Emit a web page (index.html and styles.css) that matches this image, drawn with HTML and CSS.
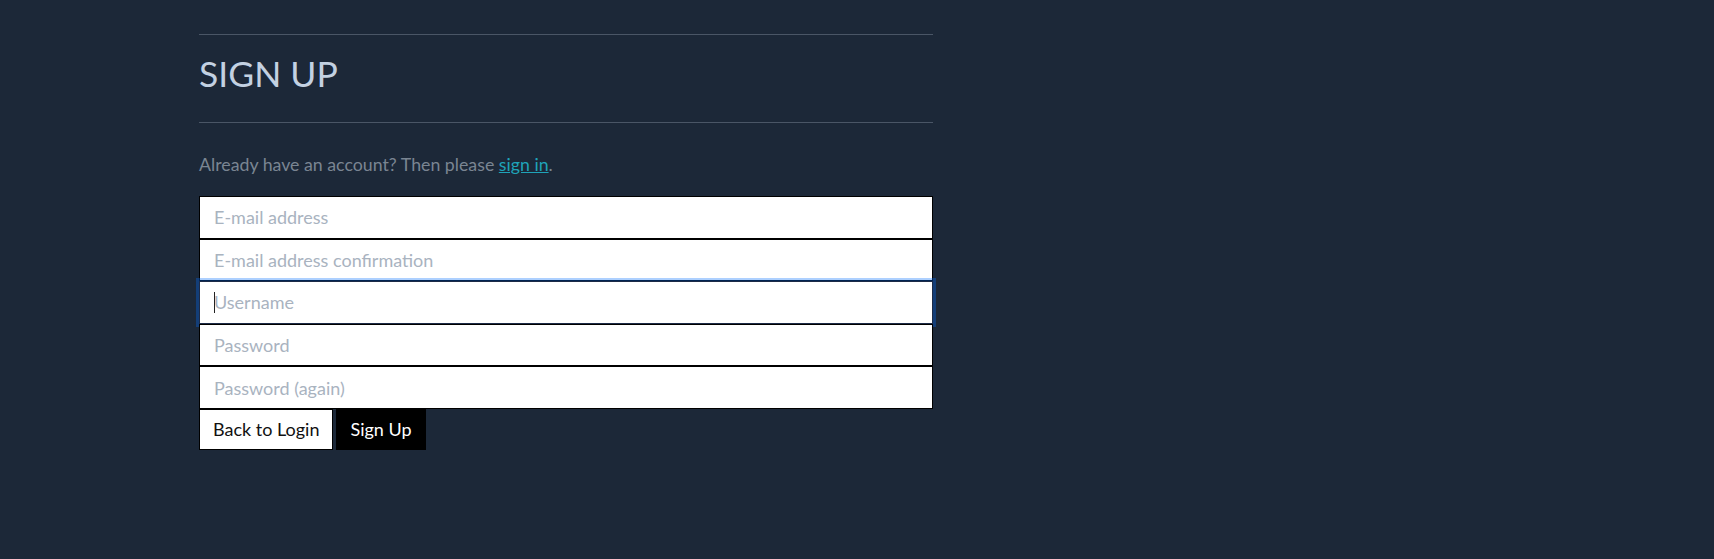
FILE: index.html
```html
<!DOCTYPE html>
<html lang="en">
<head>
<meta charset="utf-8">
<title>Sign Up</title>
<link rel="stylesheet" href="styles.css">
</head>
<body>
<main class="page">
  <section class="panel">
    <div class="rule"></div>
    <h1 class="title">SIGN UP</h1>
    <div class="rule"></div>
    <p class="lead">Already have an account? Then please <a class="link" href="#">sign in</a>.</p>
    <form class="form">
      <input class="field" type="email" placeholder="E-mail address">
      <input class="field" type="email" placeholder="E-mail address confirmation">
      <div class="field-wrap">
        <input class="field is-focused" type="text" placeholder="Username">
        <span class="caret"></span>
      </div>
      <input class="field" type="password" placeholder="Password">
      <input class="field" type="password" placeholder="Password (again)">
      <div class="actions">
        <button class="btn btn-light" type="button">Back to Login</button>
        <button class="btn btn-dark" type="submit">Sign Up</button>
      </div>
    </form>
  </section>
</main>
</body>
</html>
```

FILE: styles.css
```css
html, body {
  margin: 0;
  padding: 0;
  background: #1c2838;
  height: 100%;
}
body {
  font-family: Lato, "Open Sans", sans-serif;
}
.page {
  padding: 34px 0 0 199px;
}
.panel {
  width: 734px;
}
.rule {
  height: 1px;
  background: #4a5666;
}
.title {
  margin: 0;
  padding: 17px 0 27px;
  font-size: 35.5px;
  line-height: 43px;
  font-weight: 400;
  color: #c3d1e2;
}
.lead {
  margin: 30px 0 21px;
  font-size: 17.75px;
  line-height: 22px;
  color: #7a8592;
}
.link {
  color: #1fa3b9;
  text-decoration: underline;
}
.form {
  display: flex;
  flex-direction: column;
}
.field-wrap {
  position: relative;
  z-index: 1;
}
.field {
  box-sizing: border-box;
  display: block;
  width: 734px;
  height: 42.6px;
  margin: 0;
  padding: 0 14px;
  border: 1px solid #000;
  border-radius: 0;
  background: #fff;
  font-family: Lato, "Open Sans", sans-serif;
  font-size: 18px;
  color: #333;
  outline: none;
}
.field::placeholder {
  color: #a9b3bf;
  opacity: 1;
}
.field.is-focused,
.field:focus {
  border-color: #1d2b47;
  box-shadow: 0 0 0 3px rgba(0, 110, 255, 0.32);
}
.caret {
  position: absolute;
  left: 15px;
  top: 11px;
  width: 1px;
  height: 21px;
  background: #222;
}
.form > .field:nth-child(4) {
  position: relative;
  z-index: 2;
}
.actions {
  display: flex;
  gap: 3px;
}
.btn {
  box-sizing: border-box;
  height: 41px;
  padding: 0 13px;
  border: 1px solid #000;
  border-radius: 0;
  font-family: Lato, "Open Sans", sans-serif;
  font-size: 18px;
  cursor: pointer;
}
.btn-light {
  background: #fff;
  color: #111;
}
.btn-dark {
  background: #000;
  color: #fff;
}
```
